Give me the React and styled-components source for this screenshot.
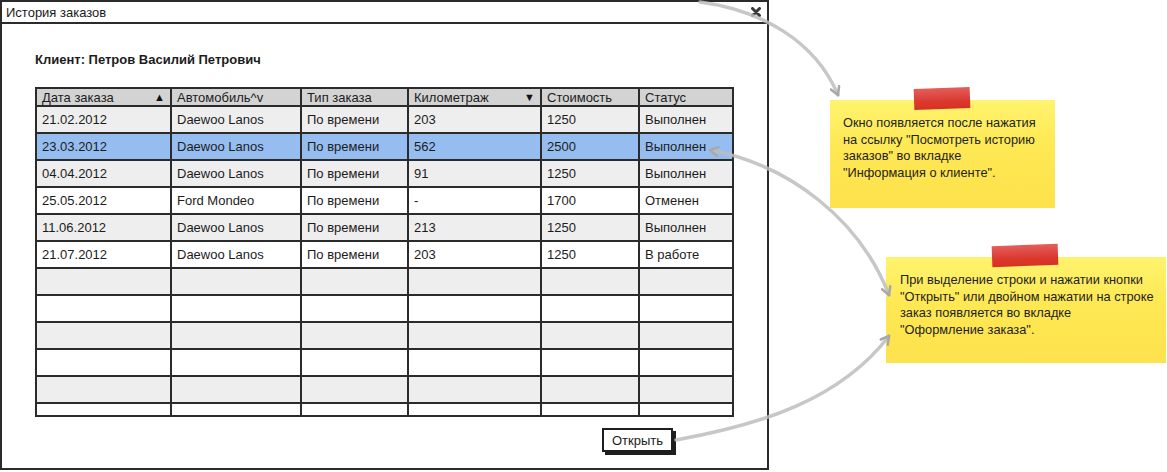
import React from 'react';
import styled, { createGlobalStyle } from 'styled-components';

const GlobalStyle = createGlobalStyle`
  html, body {
    margin: 0;
    padding: 0;
    background: #ffffff;
    overflow: hidden;
  }
  body {
    font-family: "Liberation Sans", Arial, sans-serif;
    color: #1f1f1f;
  }
`;

const Canvas = styled.div`
  position: relative;
  width: 1167px;
  height: 472px;
  display: flex;
  align-items: flex-start;
`;

const Window = styled.div`
  width: 769px;
  height: 470px;
  box-sizing: border-box;
  border: 2px solid #2b2b2b;
  display: flex;
  flex-direction: column;
  flex-shrink: 0;
  background: #fff;
`;

const TitleBar = styled.div`
  height: 22px;
  box-sizing: border-box;
  border-bottom: 2px solid #2b2b2b;
  display: flex;
  align-items: center;
  justify-content: space-between;
  padding: 0 6px 0 4px;
  font-size: 13px;
  color: #1a1a1a;
`;

const Body = styled.div`
  padding: 28px 0 0 33px;
  display: flex;
  flex-direction: column;
`;

const ClientLabel = styled.div`
  font-size: 13px;
  font-weight: 700;
  color: #1c1c1c;
  height: 16px;
  line-height: 16px;
  margin-bottom: 19px;
`;

const TableBox = styled.div`
  width: 699px;
  height: 330px;
  box-sizing: border-box;
  border: 2px solid #2b2b2b;
  overflow: hidden;
`;

const Row = styled.div`
  display: grid;
  grid-template-columns: 135px 130px 107px 133px 98px 1fr;
  height: ${p => (p.header ? 18 : 27)}px;
  box-sizing: border-box;
  border-bottom: 2px solid #2b2b2b;
  background: ${p =>
    p.header ? '#d3d3d3' : p.selected ? '#96bdf0' : p.striped ? '#eeeeee' : '#ffffff'};
`;

const Cell = styled.div`
  display: flex;
  align-items: center;
  justify-content: space-between;
  padding: 0 5px 0 5px;
  font-size: 13px;
  color: #1c1c1c;
  border-right: 2px solid #2b2b2b;
  white-space: nowrap;
  overflow: hidden;

  &:last-child {
    border-right: none;
  }
`;

const SortMark = styled.span`
  font-size: 11px;
  line-height: 1;
  color: #111;
`;

const Footer = styled.div`
  display: flex;
  justify-content: flex-end;
  width: 699px;
  padding: 11px 61px 0 0;
  box-sizing: border-box;
`;

const OpenButton = styled.button`
  width: 71px;
  height: 24px;
  box-sizing: border-box;
  border: 2px solid #1e1e1e;
  background: #fff;
  box-shadow: 3px 3px 0 #1e1e1e;
  font-family: "Liberation Sans", Arial, sans-serif;
  font-size: 13px;
  color: #1a1a1a;
  padding: 0;
`;

const NotesColumn = styled.div`
  display: flex;
  flex-direction: column;
  align-items: flex-start;
  padding-top: 100px;
`;

const Note = styled.div`
  position: relative;
  width: ${p => p.w}px;
  height: ${p => p.h}px;
  margin-left: ${p => p.offset}px;
  margin-top: ${p => p.top || 0}px;
  box-sizing: border-box;
  padding: ${p => p.pad};
  background: linear-gradient(180deg, #fff36e 0%, #fee853 45%, #fde24d 100%);
  font-size: 12.8px;
  line-height: 16.5px;
  color: #1e1e1e;
  white-space: pre-line;
`;

const Tape = styled.div`
  position: absolute;
  top: -12px;
  left: ${p => p.x}px;
  width: ${p => p.w}px;
  height: 21px;
  background: linear-gradient(180deg, #e25650 0%, #d9302a 60%, #d6261f 100%);
  transform: rotate(-2deg);
  opacity: 0.95;
`;

const Overlay = styled.svg`
  position: absolute;
  left: 0;
  top: 0;
  pointer-events: none;
`;

const CloseIcon = () => (
  <svg width="10" height="10" viewBox="0 0 10 10">
    <path d="M1.5 1.5 L8.5 8.5 M8.5 1.5 L1.5 8.5" stroke="#3a3a3a" strokeWidth="3" strokeLinecap="round" />
  </svg>
);

const headers = [
  ['Дата заказа', '▲'],
  ['Автомобиль^v', null],
  ['Тип заказа', null],
  ['Километраж', '▼'],
  ['Стоимость', null],
  ['Статус', null],
];

const orders = [
  ['21.02.2012', 'Daewoo Lanos', 'По времени', '203', '1250', 'Выполнен'],
  ['23.03.2012', 'Daewoo Lanos', 'По времени', '562', '2500', 'Выполнен'],
  ['04.04.2012', 'Daewoo Lanos', 'По времени', '91', '1250', 'Выполнен'],
  ['25.05.2012', 'Ford Mondeo', 'По времени', '-', '1700', 'Отменен'],
  ['11.06.2012', 'Daewoo Lanos', 'По времени', '213', '1250', 'Выполнен'],
  ['21.07.2012', 'Daewoo Lanos', 'По времени', '203', '1250', 'В работе'],
];

const rows = [...orders, ...Array.from({ length: 6 }, () => ['', '', '', '', '', ''])];

const Arrows = () => (
  <Overlay width="1167" height="472" viewBox="0 0 1167 472">
    <defs>
      <marker id="head" viewBox="0 0 10 10" refX="8" refY="5" markerWidth="3.2" markerHeight="3.2" orient="auto-start-reverse">
        <path d="M1 1 L8 5 L1 9" fill="none" stroke="#a8a8a8" strokeWidth="2.2" strokeLinejoin="round" strokeLinecap="round" />
      </marker>
    </defs>
    <g fill="none" stroke="#bdbdbd" strokeOpacity="0.85" strokeWidth="3.5" strokeLinecap="round">
      <path d="M700 2 C760 10, 815 40, 838 95" markerEnd="url(#head)" />
      <path d="M710 150 C790 165, 860 220, 889 295" markerStart="url(#head)" markerEnd="url(#head)" />
      <path d="M676 440 C760 425, 840 400, 889 336" markerEnd="url(#head)" />
    </g>
  </Overlay>
);

const App = () => {
  return (
    <>
      <GlobalStyle />
      <Canvas>
        <Window>
          <TitleBar>
            <span>История заказов</span>
            <CloseIcon />
          </TitleBar>
          <Body>
            <ClientLabel>Клиент: Петров Василий Петрович</ClientLabel>
            <TableBox>
              <Row header>
                {headers.map(([title, mark]) => (
                  <Cell key={title}>
                    <span>{title}</span>
                    {mark && <SortMark>{mark}</SortMark>}
                  </Cell>
                ))}
              </Row>
              {rows.map((row, i) => (
                <Row key={i} striped={i % 2 === 0} selected={i === 1}>
                  {row.map((value, j) => (
                    <Cell key={j}>{value}</Cell>
                  ))}
                </Row>
              ))}
            </TableBox>
            <Footer>
              <OpenButton>Открыть</OpenButton>
            </Footer>
          </Body>
        </Window>
        <NotesColumn>
          <Note w={225} h={108} offset={61} pad="15px 6px 0 13px">
            <Tape x={84} w={56} />
            {'Окно появляется после нажатия\nна ссылку "Посмотреть историю\nзаказов" во вкладке\n"Информация о клиенте".'}
          </Note>
          <Note w={280} h={106} offset={117} top={49} pad="15px 4px 0 14px">
            <Tape x={106} w={66} />
            {'При выделение строки и нажатии кнопки\n"Открыть" или двойном нажатии на строке\nзаказ появляется во вкладке\n"Оформление заказа".'}
          </Note>
        </NotesColumn>
        <Arrows />
      </Canvas>
    </>
  );
};

export default App;
